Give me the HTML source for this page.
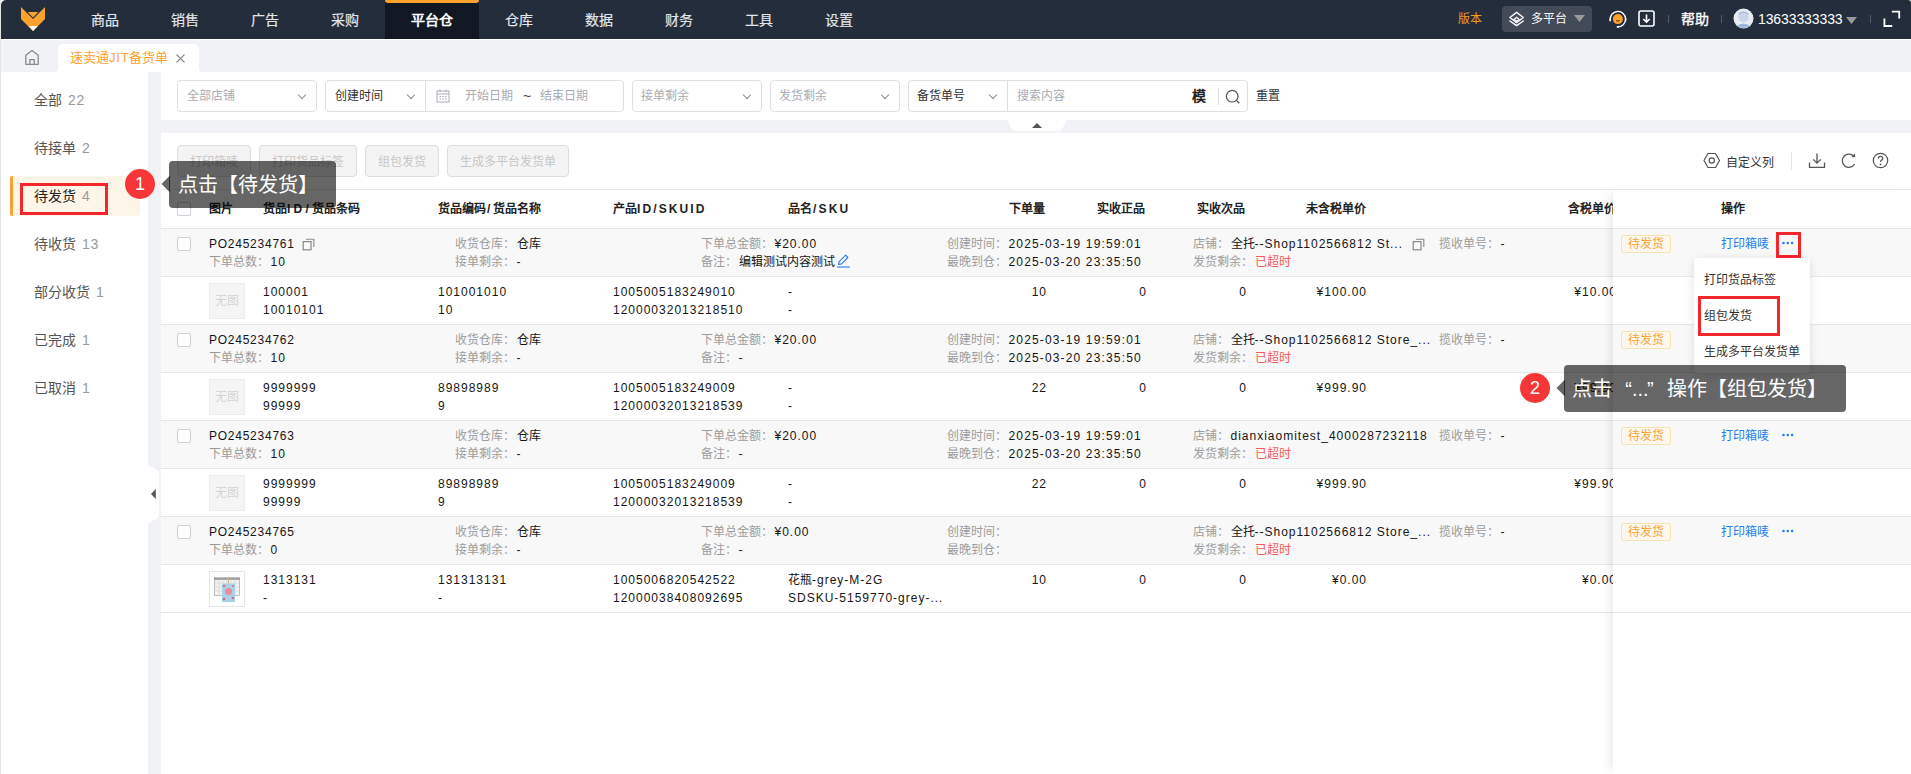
<!DOCTYPE html>
<html lang="zh-CN"><head><meta charset="utf-8">
<style>
*{box-sizing:border-box;margin:0;padding:0}
html,body{width:1911px;height:774px;overflow:hidden;background:#fff;font-family:"Liberation Sans",sans-serif;font-size:12px;color:#151515}
.a{position:absolute;white-space:nowrap}
#nav{position:absolute;left:1px;top:0;width:1910px;height:39px;background:#232d3c;border-radius:5px 3px 0 0}
.ni{position:absolute;top:0;height:39px;line-height:40px;font-size:14px;color:#e3e6eb;text-align:center;-webkit-text-stroke:.2px #e3e6eb}
.v{letter-spacing:1px}
.box{position:absolute;top:80px;height:32px;border:1px solid #dcdfe6;border-radius:4px;background:#fff}
.ph{color:#a8abb2}
.chev{position:absolute;top:11px;width:6px;height:6px;margin-left:2px;border-right:1px solid #8f8f8f;border-bottom:1px solid #8f8f8f;transform:rotate(45deg)}
.btn{position:absolute;top:145px;height:32px;line-height:32px;border:1px solid #dedede;border-radius:4px;background:#f4f4f4;color:#c6c6c6;text-align:center}
.side{position:absolute;left:34px;font-size:14px;color:#555;line-height:20px}
.side b{font-weight:normal;color:#999;margin-left:6px;letter-spacing:.6px}
.hd{position:absolute;top:201px;font-weight:bold;color:#222;line-height:16px}
.rg{position:absolute;left:161px;width:1750px;height:48px;background:#f8f8f8;border-bottom:1px solid #e6e6e6}
.ri{position:absolute;left:161px;width:1750px;height:48px;background:#fff;border-bottom:1px solid #e6e6e6}
.cb{position:absolute;left:177px;width:14px;height:14px;border:1px solid #cdd0d6;border-radius:2px;background:#fff}
.t{position:absolute;white-space:nowrap;line-height:18px}
.lb{color:#9c9c9c;margin-right:1.5px}
.vb{letter-spacing:2px}
</style></head><body>
<!-- left edge -->
<div class="a" style="left:0;top:0;width:1px;height:774px;background:#e4e4e4"></div>

<!-- NAV -->
<div id="nav">
  <svg class="a" style="left:-1px;top:0" width="60" height="39" viewBox="0 0 60 39">
    <polygon points="21,7 33,19 45,7 45,19 33,31 21,19" fill="#ffa22d"/>
    <polygon points="27.7,11.9 38.3,11.9 33,17.4" fill="#ffa22d"/>
    <polygon points="28.6,26 37.8,26 33.2,31" fill="#fff"/>
  </svg>
  <div class="ni" style="left:64px;width:80px">商品</div>
  <div class="ni" style="left:144px;width:80px">销售</div>
  <div class="ni" style="left:224px;width:80px">广告</div>
  <div class="ni" style="left:304px;width:80px">采购</div>
  <div class="ni" style="left:384px;width:94px;background:#111824;color:#fff;-webkit-text-stroke:.6px #fff">平台仓</div>
  <div class="a" style="left:384px;top:0;width:94px;height:3px;background:#ffa22d;border-radius:0 0 3px 3px"></div>
  <div class="ni" style="left:478px;width:80px">仓库</div>
  <div class="ni" style="left:558px;width:80px">数据</div>
  <div class="ni" style="left:638px;width:80px">财务</div>
  <div class="ni" style="left:718px;width:80px">工具</div>
  <div class="ni" style="left:798px;width:80px">设置</div>
  <div class="a" style="left:1457px;top:11px;font-size:12px;line-height:16px;color:#f59a23">版本</div>
  <div class="a" style="left:1501px;top:6px;width:90px;height:26px;background:#434b59;border-radius:4px"></div>
  <svg class="a" style="left:1506px;top:11px" width="18" height="16" viewBox="0 0 18 16">
    <path d="M9.6 1.4 L16.3 6.5 L9.6 11.6 L2.9 6.5 Z" fill="none" stroke="#fff" stroke-width="1.4" stroke-linejoin="round"/>
    <path d="M9.6 6.2 L12 8.2 L9.6 10.2 L7.2 8.2 Z" fill="none" stroke="#fff" stroke-width="1.2"/>
    <path d="M2.9 10 L9.6 14.6 L16.3 10" fill="none" stroke="#fff" stroke-width="1.4" stroke-linejoin="round" stroke-linecap="round"/>
  </svg>
  <div class="a" style="left:1530px;top:11px;font-size:12px;line-height:16px;color:#fff">多平台</div>
  <svg class="a" style="left:1573px;top:15px" width="11" height="7" viewBox="0 0 11 7"><path d="M0 0H11L5.5 7Z" fill="#9a9a9a"/></svg>
  <svg class="a" style="left:1606px;top:9px" width="22" height="20" viewBox="0 0 22 20">
    <circle cx="10.9" cy="10.1" r="5" fill="#ffa22d"/>
    <path d="M9.1 11.4 Q10.9 13.2 12.7 11.4" fill="none" stroke="#3a3020" stroke-width="1"/>
    <path d="M3.3 11.2 A7.7 7.7 0 1 1 10.5 17.8" fill="none" stroke="#fff" stroke-width="1.4"/>
    <rect x="2.4" y="9.4" width="1.6" height="3.2" rx="0.8" fill="#fff"/>
    <rect x="17.8" y="9.2" width="1.6" height="3.2" rx="0.8" fill="#fff"/>
    <rect x="9.6" y="16.9" width="2.4" height="1.8" rx="0.9" fill="#fff"/>
  </svg>
  <svg class="a" style="left:1637px;top:10px" width="18" height="18" viewBox="0 0 18 18">
    <rect x="1" y="1" width="15" height="15" rx="2" fill="none" stroke="#fff" stroke-width="1.6"/>
    <path d="M8.5 4.5V12 M5.3 9 L8.5 12.2 L11.7 9" fill="none" stroke="#fff" stroke-width="1.6"/>
  </svg>
  <div class="a" style="left:1667px;top:15px;width:1px;height:8px;background:#555d6a"></div>
  <div class="a" style="left:1680px;top:10px;font-size:14px;line-height:18px;color:#fff;-webkit-text-stroke:.35px #fff">帮助</div>
  <div class="a" style="left:1720px;top:15px;width:1px;height:8px;background:#555d6a"></div>
  <svg class="a" style="left:1732px;top:8px" width="21" height="21" viewBox="0 0 21 21">
    <circle cx="10.5" cy="10.5" r="10" fill="#e8ecf2"/>
    <circle cx="10.5" cy="9" r="5.2" fill="#c9d6ea"/>
    <path d="M5.5 7 Q10.5 2.5 15.5 7 L15.5 5.5 Q10.5 1.5 5.5 5.5Z" fill="#9fb6d8"/>
    <path d="M3.5 18 Q10.5 13 17.5 18 Q10.5 22 3.5 18Z" fill="#9fb6d8"/>
  </svg>
  <div class="a" style="left:1757px;top:10px;font-size:14px;line-height:18px;color:#fff;letter-spacing:-0.1px">13633333333</div>
  <svg class="a" style="left:1845px;top:17px" width="11" height="7" viewBox="0 0 11 7"><path d="M0 0H11L5.5 7Z" fill="#9a9a9a"/></svg>
  <div class="a" style="left:1869px;top:15px;width:1px;height:8px;background:#555d6a"></div>
  <svg class="a" style="left:1881px;top:10px" width="20" height="18" viewBox="0 0 20 18">
    <path d="M9.8 1.6H17.2V8.6 M2.4 8.6V16H10.2" fill="none" stroke="#fff" stroke-width="1.8"/>
  </svg>
</div>

<!-- TAB BAR -->
<div class="a" style="left:1px;top:40px;width:1910px;height:12px;background:#f0f2f5"></div>
<div class="a" style="left:1px;top:40px;width:57px;height:32px;background:#f0f2f5;border-radius:0 0 4px 0"></div>
<div class="a" style="left:199px;top:40px;width:1712px;height:32px;background:#f0f2f5;border-radius:0 0 0 4px"></div>
<svg class="a" style="left:24px;top:49px" width="16" height="17" viewBox="0 0 16 17">
  <path d="M1.8 15.4V6.2L8 1.6L14.2 6.2V15.4Z" fill="none" stroke="#8a8a8a" stroke-width="1.3" stroke-linejoin="round"/>
  <path d="M5.9 15.4V10.6H10.2V15.4" fill="none" stroke="#8a8a8a" stroke-width="1.3"/>
</svg>
<div class="a" style="left:58px;top:44px;width:141px;height:28px;background:#fff;border-radius:5px 5px 0 0"></div>
<div class="a" style="left:70px;top:50px;font-size:13px;line-height:16px;color:#ff9f2e">速卖通<span style="letter-spacing:.8px">JIT</span>备货单</div>
<svg class="a" style="left:175px;top:53px" width="11" height="11" viewBox="0 0 11 11"><path d="M1.5 1.5L9.5 9.5M9.5 1.5L1.5 9.5" stroke="#8c8c8c" stroke-width="1.1"/></svg>

<!-- SIDEBAR -->
<div class="a" style="left:1px;top:72px;width:147px;height:702px;background:#fff"></div>
<div class="a" style="left:148px;top:72px;width:13px;height:702px;background:#f0f2f5"></div>
<div class="side" style="top:90px">全部<b>22</b></div>
<div class="side" style="top:138px">待接单<b>2</b></div>
<div class="a" style="left:10px;top:176px;width:130px;height:40px;background:#fef5e9;border-radius:0 4px 4px 0"></div>
<div class="a" style="left:10px;top:176px;width:3px;height:40px;background:#ffa22d;border-radius:2px 0 0 2px"></div>
<div class="side" style="top:186px;color:#222">待发货<b>4</b></div>
<div class="side" style="top:234px">待收货<b>13</b></div>
<div class="side" style="top:282px">部分收货<b>1</b></div>
<div class="side" style="top:330px">已完成<b>1</b></div>
<div class="side" style="top:378px">已取消<b>1</b></div>
<div class="a" style="left:20px;top:183px;width:88px;height:32px;border:3px solid #f3272b"></div>
<!-- collapse tab left -->
<svg class="a" style="left:148px;top:465px" width="12" height="58" viewBox="0 0 12 58">
  <path d="M0 0 Q0 0 0 0 L8 4 Q11 5.5 11 9 V49 Q11 52.5 8 54 L0 58Z" fill="#fff"/>
  <path d="M7.8 24 V34 L3 29Z" fill="#555"/>
</svg>

<!-- FILTER PANEL -->
<div class="a" style="left:161px;top:72px;width:1750px;height:48px;background:#fff"></div>
<div class="a" style="left:161px;top:120px;width:1750px;height:13px;background:#f0f2f5"></div>
<div class="box" style="left:177px;width:140px"><span class="a ph" style="left:9px;top:7px;line-height:16px">全部店铺</span><i class="chev" style="left:119px"></i></div>
<div class="box" style="left:325px;width:299px">
  <span class="a" style="left:9px;top:7px;line-height:16px;color:#303133">创建时间</span><i class="chev" style="left:80px"></i>
  <div class="a" style="left:99px;top:0;width:1px;height:30px;background:#dcdfe6"></div>
  <svg class="a" style="left:110px;top:8px" width="14" height="14" viewBox="0 0 14 14"><rect x="1" y="2" width="12" height="11" fill="none" stroke="#a8abb2" stroke-width="1"/><path d="M1 5H13M4 0.5V3M10 0.5V3M3.5 7.5H5M6.3 7.5H7.8M9 7.5H10.5M3.5 10H5M6.3 10H7.8M9 10H10.5" stroke="#a8abb2" stroke-width="1"/></svg>
  <span class="a ph" style="left:139px;top:7px;line-height:16px">开始日期</span>
  <span class="a" style="left:197px;top:7px;line-height:16px;color:#444;font-size:14px">~</span>
  <span class="a ph" style="left:214px;top:7px;line-height:16px">结束日期</span>
</div>
<div class="box" style="left:632px;width:130px"><span class="a ph" style="left:8px;top:7px;line-height:16px">接单剩余</span><i class="chev" style="left:109px"></i></div>
<div class="box" style="left:770px;width:130px"><span class="a ph" style="left:8px;top:7px;line-height:16px">发货剩余</span><i class="chev" style="left:109px"></i></div>
<div class="box" style="left:908px;width:340px">
  <span class="a" style="left:8px;top:7px;line-height:16px;color:#303133">备货单号</span><i class="chev" style="left:79px"></i>
  <div class="a" style="left:98px;top:0;width:1px;height:30px;background:#dcdfe6"></div>
  <span class="a ph" style="left:108px;top:7px;line-height:16px">搜索内容</span>
  <span class="a" style="left:283px;top:6px;line-height:18px;font-size:14px;font-weight:bold;color:#222">模</span>
  <div class="a" style="left:309px;top:7px;width:1px;height:17px;background:#dcdfe6"></div>
  <svg class="a" style="left:316px;top:8px" width="16" height="16" viewBox="0 0 16 16"><circle cx="7.2" cy="7.2" r="5.8" fill="none" stroke="#555" stroke-width="1.2"/><path d="M11.4 11.4L14.3 14.3" stroke="#555" stroke-width="1.3"/></svg>
</div>
<div class="a" style="left:1256px;top:88px;line-height:16px;color:#303133">重置</div>
<svg class="a" style="left:1007px;top:119px" width="60" height="13" viewBox="0 0 60 13">
  <path d="M0.5 0.5 L59.5 0.5 L56 8.5 Q54.5 12 50.5 12 L9.5 12 Q5.5 12 4 8.5Z" fill="#fff"/>
  <path d="M25 9H35L30 4Z" fill="#555"/>
</svg>
<!-- TOOLBAR + TABLE PANEL -->
<div class="a" style="left:161px;top:133px;width:1750px;height:641px;background:#fff"></div>
<div class="btn" style="left:177px;width:74px">打印箱唛</div>
<div class="btn" style="left:259px;width:98px">打印货品标签</div>
<div class="btn" style="left:365px;width:74px">组包发货</div>
<div class="btn" style="left:447px;width:122px">生成多平台发货单</div>
<svg class="a" style="left:1703px;top:152px" width="18" height="17" viewBox="0 0 18 17">
  <path d="M5 1.5H12.5L16.5 8.5L12.5 15.5H5L1 8.5Z" fill="none" stroke="#555" stroke-width="1.2" stroke-linejoin="round"/>
  <circle cx="8.8" cy="8.5" r="2.6" fill="none" stroke="#555" stroke-width="1.2"/>
</svg>
<div class="a" style="left:1726px;top:155px;line-height:16px;color:#333">自定义列</div>
<div class="a" style="left:1791px;top:152px;width:1px;height:18px;background:#e4e4e4"></div>
<svg class="a" style="left:1808px;top:152px" width="18" height="17" viewBox="0 0 18 17">
  <path d="M9 1.5V11 M5.2 7.4L9 11.2L12.8 7.4 M1.5 10.5V15.3H16.5V10.5" fill="none" stroke="#555" stroke-width="1.3"/>
</svg>
<svg class="a" style="left:1840px;top:152px" width="17" height="17" viewBox="0 0 17 17">
  <path d="M14.2 4.8 A6.6 6.6 0 1 0 14.6 12" fill="none" stroke="#555" stroke-width="1.3"/>
  <path d="M11.6 4.9 L15.3 5.3 L14.8 1.6Z" fill="#555"/>
</svg>
<svg class="a" style="left:1872px;top:152px" width="17" height="17" viewBox="0 0 17 17">
  <circle cx="8.5" cy="8.5" r="7.2" fill="none" stroke="#555" stroke-width="1.2"/>
  <path d="M6.3 6.6 Q6.3 4.3 8.5 4.3 Q10.7 4.3 10.7 6.4 Q10.7 7.7 9.4 8.3 Q8.5 8.8 8.5 10" fill="none" stroke="#555" stroke-width="1.3"/>
  <circle cx="8.5" cy="12.4" r="0.9" fill="#555"/>
</svg>
<!-- table header -->
<div class="a" style="left:161px;top:189px;width:1750px;height:1px;background:#e6e6e6"></div>
<div class="a" style="left:161px;top:228px;width:1750px;height:1px;background:#e6e6e6"></div>
<div class="cb" style="top:202px"></div>
<div class="hd" style="left:209px">图片</div>
<div class="hd" style="left:263px">货品<span style="letter-spacing:3.2px">ID/</span>货品条码</div>
<div class="hd" style="left:438px">货品编码<span style="letter-spacing:3px;margin-left:1px">/</span>货品名称</div>
<div class="hd" style="left:613px">产品<span style="letter-spacing:2.1px">ID/SKUID</span></div>
<div class="hd" style="left:788px">品名<span style="letter-spacing:2.2px;margin-left:1px">/SKU</span></div>
<div class="hd" style="left:945px;width:100px;text-align:right">下单量</div>
<div class="hd" style="left:1045px;width:100px;text-align:right">实收正品</div>
<div class="hd" style="left:1145px;width:100px;text-align:right">实收次品</div>
<div class="hd" style="left:1306px">未含税单价</div>
<div class="hd" style="left:1513px;width:103px;text-align:right">含税单价</div>

<div class="a" style="left:161px;top:229px;width:1750px;height:47px;background:#f8f8f8"></div>
<div class="a" style="left:161px;top:276px;width:1750px;height:1px;background:#e6e6e6"></div>
<div class="cb" style="top:237px"></div>
<div class="t" style="left:209px;top:235px;letter-spacing:.75px">PO245234761</div>
<svg class="a" style="left:302px;top:238px" width="13" height="13" viewBox="0 0 13 13"><path d="M4 1.2H11.8V9" fill="none" stroke="#888" stroke-width="1.1"/><rect x="1.2" y="3.6" width="7.8" height="8.2" fill="none" stroke="#888" stroke-width="1.2"/></svg>
<div class="t" style="left:209px;top:253px"><span class="lb">下单总数：</span><span class="v">10</span></div>
<div class="t" style="left:455px;top:235px"><span class="lb">收货仓库：</span>仓库</div>
<div class="t" style="left:455px;top:253px"><span class="lb">接单剩余：</span><span class="v">-</span></div>
<div class="t" style="left:701px;top:235px"><span class="lb">下单总金额：</span><span class="v">¥20.00</span></div>
<div class="t" style="left:701px;top:253px"><span class="lb">备注：</span>编辑测试内容测试</div>
<svg class="a" style="left:836px;top:254px" width="15" height="14" viewBox="0 0 15 14"><path d="M2.5 10.5L3.2 7.6L9.6 1.2L11.9 3.5L5.5 9.9Z" fill="none" stroke="#2a7cf6" stroke-width="1.1" stroke-linejoin="round"/><path d="M1 13H14" stroke="#2a7cf6" stroke-width="1.1"/></svg>
<div class="t" style="left:947px;top:235px"><span class="lb">创建时间：</span><span style="letter-spacing:1.15px">2025-03-19 19:59:01</span></div>
<div class="t" style="left:947px;top:253px"><span class="lb">最晚到仓：</span><span style="letter-spacing:1.15px">2025-03-20 23:35:50</span></div>
<div class="t" style="left:1193px;top:235px"><span class="lb">店铺：</span>全托<span class="v">--Shop1102566812 St...</span></div>
<svg class="a" style="left:1412px;top:238px" width="13" height="13" viewBox="0 0 13 13"><path d="M4 1.2H11.8V9" fill="none" stroke="#888" stroke-width="1.1"/><rect x="1.2" y="3.6" width="7.8" height="8.2" fill="none" stroke="#888" stroke-width="1.2"/></svg>
<div class="t" style="left:1193px;top:253px"><span class="lb">发货剩余：</span><span style="color:#f45a5a">已超时</span></div>
<div class="t" style="left:1439px;top:235px"><span class="lb">揽收单号：</span><span class="v">-</span></div>
<div class="a" style="left:161px;top:324px;width:1750px;height:1px;background:#e6e6e6"></div>
<div class="a" style="left:209px;top:283px;width:36px;height:36px;background:#f5f5f5;border:1px solid #ececec;color:#d5d5d5;font-size:12px;line-height:34px;text-align:center">无图</div>
<div class="t" style="left:263px;top:283px"><span class="v">100001</span></div>
<div class="t" style="left:263px;top:301px"><span class="v">10010101</span></div>
<div class="t" style="left:438px;top:283px"><span class="v">101001010</span></div>
<div class="t" style="left:438px;top:301px"><span class="v">10</span></div>
<div class="t" style="left:613px;top:283px"><span class="v">1005005183249010</span></div>
<div class="t" style="left:613px;top:301px"><span class="v">12000032013218510</span></div>
<div class="t" style="left:788px;top:283px"><span class="v">-</span></div>
<div class="t" style="left:788px;top:301px"><span class="v">-</span></div>
<div class="t" style="left:945px;width:102px;text-align:right;top:283px"><span class="v">10</span></div>
<div class="t" style="left:1045px;width:102px;text-align:right;top:283px"><span class="v">0</span></div>
<div class="t" style="left:1145px;width:102px;text-align:right;top:283px"><span class="v">0</span></div>
<div class="t" style="left:1265px;width:102px;text-align:right;top:283px"><span class="v">¥100.00</span></div>
<div class="t" style="left:1515px;width:102px;text-align:right;top:283px"><span class="v">¥10.00</span></div>
<div class="a" style="left:161px;top:325px;width:1750px;height:47px;background:#f8f8f8"></div>
<div class="a" style="left:161px;top:372px;width:1750px;height:1px;background:#e6e6e6"></div>
<div class="cb" style="top:333px"></div>
<div class="t" style="left:209px;top:331px;letter-spacing:.75px">PO245234762</div>
<div class="t" style="left:209px;top:349px"><span class="lb">下单总数：</span><span class="v">10</span></div>
<div class="t" style="left:455px;top:331px"><span class="lb">收货仓库：</span>仓库</div>
<div class="t" style="left:455px;top:349px"><span class="lb">接单剩余：</span><span class="v">-</span></div>
<div class="t" style="left:701px;top:331px"><span class="lb">下单总金额：</span><span class="v">¥20.00</span></div>
<div class="t" style="left:701px;top:349px"><span class="lb">备注：</span><span class="v">-</span></div>
<div class="t" style="left:947px;top:331px"><span class="lb">创建时间：</span><span style="letter-spacing:1.15px">2025-03-19 19:59:01</span></div>
<div class="t" style="left:947px;top:349px"><span class="lb">最晚到仓：</span><span style="letter-spacing:1.15px">2025-03-20 23:35:50</span></div>
<div class="t" style="left:1193px;top:331px"><span class="lb">店铺：</span>全托<span class="v">--Shop1102566812 Store_...</span></div>
<div class="t" style="left:1193px;top:349px"><span class="lb">发货剩余：</span><span style="color:#f45a5a">已超时</span></div>
<div class="t" style="left:1439px;top:331px"><span class="lb">揽收单号：</span><span class="v">-</span></div>
<div class="a" style="left:161px;top:420px;width:1750px;height:1px;background:#e6e6e6"></div>
<div class="a" style="left:209px;top:379px;width:36px;height:36px;background:#f5f5f5;border:1px solid #ececec;color:#d5d5d5;font-size:12px;line-height:34px;text-align:center">无图</div>
<div class="t" style="left:263px;top:379px"><span class="v">9999999</span></div>
<div class="t" style="left:263px;top:397px"><span class="v">99999</span></div>
<div class="t" style="left:438px;top:379px"><span class="v">89898989</span></div>
<div class="t" style="left:438px;top:397px"><span class="v">9</span></div>
<div class="t" style="left:613px;top:379px"><span class="v">1005005183249009</span></div>
<div class="t" style="left:613px;top:397px"><span class="v">12000032013218539</span></div>
<div class="t" style="left:788px;top:379px"><span class="v">-</span></div>
<div class="t" style="left:788px;top:397px"><span class="v">-</span></div>
<div class="t" style="left:945px;width:102px;text-align:right;top:379px"><span class="v">22</span></div>
<div class="t" style="left:1045px;width:102px;text-align:right;top:379px"><span class="v">0</span></div>
<div class="t" style="left:1145px;width:102px;text-align:right;top:379px"><span class="v">0</span></div>
<div class="t" style="left:1265px;width:102px;text-align:right;top:379px"><span class="v">¥999.90</span></div>
<div class="t" style="left:1515px;width:102px;text-align:right;top:379px"><span class="v">¥99.90</span></div>
<div class="a" style="left:161px;top:421px;width:1750px;height:47px;background:#f8f8f8"></div>
<div class="a" style="left:161px;top:468px;width:1750px;height:1px;background:#e6e6e6"></div>
<div class="cb" style="top:429px"></div>
<div class="t" style="left:209px;top:427px;letter-spacing:.75px">PO245234763</div>
<div class="t" style="left:209px;top:445px"><span class="lb">下单总数：</span><span class="v">10</span></div>
<div class="t" style="left:455px;top:427px"><span class="lb">收货仓库：</span>仓库</div>
<div class="t" style="left:455px;top:445px"><span class="lb">接单剩余：</span><span class="v">-</span></div>
<div class="t" style="left:701px;top:427px"><span class="lb">下单总金额：</span><span class="v">¥20.00</span></div>
<div class="t" style="left:701px;top:445px"><span class="lb">备注：</span><span class="v">-</span></div>
<div class="t" style="left:947px;top:427px"><span class="lb">创建时间：</span><span style="letter-spacing:1.15px">2025-03-19 19:59:01</span></div>
<div class="t" style="left:947px;top:445px"><span class="lb">最晚到仓：</span><span style="letter-spacing:1.15px">2025-03-20 23:35:50</span></div>
<div class="t" style="left:1193px;top:427px"><span class="lb">店铺：</span><span class="v">dianxiaomitest_4000287232118</span></div>
<div class="t" style="left:1193px;top:445px"><span class="lb">发货剩余：</span><span style="color:#f45a5a">已超时</span></div>
<div class="t" style="left:1439px;top:427px"><span class="lb">揽收单号：</span><span class="v">-</span></div>
<div class="a" style="left:161px;top:516px;width:1750px;height:1px;background:#e6e6e6"></div>
<div class="a" style="left:209px;top:475px;width:36px;height:36px;background:#f5f5f5;border:1px solid #ececec;color:#d5d5d5;font-size:12px;line-height:34px;text-align:center">无图</div>
<div class="t" style="left:263px;top:475px"><span class="v">9999999</span></div>
<div class="t" style="left:263px;top:493px"><span class="v">99999</span></div>
<div class="t" style="left:438px;top:475px"><span class="v">89898989</span></div>
<div class="t" style="left:438px;top:493px"><span class="v">9</span></div>
<div class="t" style="left:613px;top:475px"><span class="v">1005005183249009</span></div>
<div class="t" style="left:613px;top:493px"><span class="v">12000032013218539</span></div>
<div class="t" style="left:788px;top:475px"><span class="v">-</span></div>
<div class="t" style="left:788px;top:493px"><span class="v">-</span></div>
<div class="t" style="left:945px;width:102px;text-align:right;top:475px"><span class="v">22</span></div>
<div class="t" style="left:1045px;width:102px;text-align:right;top:475px"><span class="v">0</span></div>
<div class="t" style="left:1145px;width:102px;text-align:right;top:475px"><span class="v">0</span></div>
<div class="t" style="left:1265px;width:102px;text-align:right;top:475px"><span class="v">¥999.90</span></div>
<div class="t" style="left:1515px;width:102px;text-align:right;top:475px"><span class="v">¥99.90</span></div>
<div class="a" style="left:161px;top:517px;width:1750px;height:47px;background:#f8f8f8"></div>
<div class="a" style="left:161px;top:564px;width:1750px;height:1px;background:#e6e6e6"></div>
<div class="cb" style="top:525px"></div>
<div class="t" style="left:209px;top:523px;letter-spacing:.75px">PO245234765</div>
<div class="t" style="left:209px;top:541px"><span class="lb">下单总数：</span><span class="v">0</span></div>
<div class="t" style="left:455px;top:523px"><span class="lb">收货仓库：</span>仓库</div>
<div class="t" style="left:455px;top:541px"><span class="lb">接单剩余：</span><span class="v">-</span></div>
<div class="t" style="left:701px;top:523px"><span class="lb">下单总金额：</span><span class="v">¥0.00</span></div>
<div class="t" style="left:701px;top:541px"><span class="lb">备注：</span><span class="v">-</span></div>
<div class="t" style="left:947px;top:523px"><span class="lb">创建时间：</span><span style="letter-spacing:1.15px"></span></div>
<div class="t" style="left:947px;top:541px"><span class="lb">最晚到仓：</span><span style="letter-spacing:1.15px"></span></div>
<div class="t" style="left:1193px;top:523px"><span class="lb">店铺：</span>全托<span class="v">--Shop1102566812 Store_...</span></div>
<div class="t" style="left:1193px;top:541px"><span class="lb">发货剩余：</span><span style="color:#f45a5a">已超时</span></div>
<div class="t" style="left:1439px;top:523px"><span class="lb">揽收单号：</span><span class="v">-</span></div>
<div class="a" style="left:161px;top:612px;width:1750px;height:1px;background:#e6e6e6"></div>
<div class="a" style="left:209px;top:571px;width:36px;height:36px;background:#fff;border:1px solid #e6e6e6"></div>
<svg class="a" style="left:214px;top:577px" width="26" height="26" viewBox="0 0 26 26">
<rect x="0.5" y="0.5" width="25" height="18" fill="#f1f1f1" stroke="#9a9a9a" stroke-width="0.6"/>
<path d="M0.5 2H25.5" stroke="#555" stroke-width="1"/>
<path d="M5 2V18M9 2V18M13 2V18M17 2V18M21 2V18M1 6H25M1 10H25M1 14H25" stroke="#cfcfcf" stroke-width="0.5"/>
<rect x="8" y="6.5" width="13" height="18.5" fill="#a6d3e6"/>
<circle cx="14.5" cy="14.5" r="3.6" fill="#f08aa0"/>
<circle cx="10" cy="9" r="1.2" fill="#e86a8a"/><circle cx="19" cy="21" r="1.3" fill="#e86a8a"/><circle cx="10" cy="22" r="1.2" fill="#d75d7c"/><circle cx="19" cy="9" r="1" fill="#e86a8a"/>
<path d="M14.5 0V6.5" stroke="#c9b48a" stroke-width="1"/>
</svg>
<div class="t" style="left:263px;top:571px"><span class="v">1313131</span></div>
<div class="t" style="left:263px;top:589px"><span class="v">-</span></div>
<div class="t" style="left:438px;top:571px"><span class="v">131313131</span></div>
<div class="t" style="left:438px;top:589px"><span class="v">-</span></div>
<div class="t" style="left:613px;top:571px"><span class="v">1005006820542522</span></div>
<div class="t" style="left:613px;top:589px"><span class="v">12000038408092695</span></div>
<div class="t" style="left:788px;top:571px">花瓶<span class="v">-grey-M-2G</span></div>
<div class="t" style="left:788px;top:589px"><span class="v">SDSKU-5159770-grey-...</span></div>
<div class="t" style="left:945px;width:102px;text-align:right;top:571px"><span class="v">10</span></div>
<div class="t" style="left:1045px;width:102px;text-align:right;top:571px"><span class="v">0</span></div>
<div class="t" style="left:1145px;width:102px;text-align:right;top:571px"><span class="v">0</span></div>
<div class="t" style="left:1265px;width:102px;text-align:right;top:571px"><span class="v">¥0.00</span></div>
<div class="t" style="left:1515px;width:102px;text-align:right;top:571px"><span class="v">¥0.00</span></div>
<!-- fixed -->
<div class="a" style="left:1613px;top:189px;width:298px;height:585px;background:#fff;box-shadow:-7px 0 10px -5px rgba(0,0,0,0.10)"></div>
<div class="a" style="left:1613px;top:189px;width:298px;height:1px;background:#e6e6e6"></div>
<div class="a" style="left:1613px;top:228px;width:298px;height:1px;background:#e6e6e6"></div>
<div class="hd" style="left:1721px">操作</div>
<div class="a" style="left:1613px;top:229px;width:298px;height:47px;background:#f8f8f8"></div>
<div class="a" style="left:1613px;top:276px;width:298px;height:1px;background:#e6e6e6"></div>
<div class="a" style="left:1613px;top:324px;width:298px;height:1px;background:#e6e6e6"></div>
<div class="a" style="left:1621px;top:235px;width:50px;height:18px;background:#fdf6ec;border:1px solid #fbe1b6;border-radius:2px;color:#f7a441;line-height:16px;text-align:center">待发货</div>
<div class="t" style="left:1721px;top:235px;color:#1f7ff0">打印箱唛</div>
<svg class="a" style="left:1781px;top:241px" width="14" height="4" viewBox="0 0 14 4"><circle cx="2.5" cy="2" r="1.3" fill="#1f7ff0"/><circle cx="6.8" cy="2" r="1.3" fill="#1f7ff0"/><circle cx="11.1" cy="2" r="1.3" fill="#1f7ff0"/></svg>
<div class="a" style="left:1613px;top:325px;width:298px;height:47px;background:#f8f8f8"></div>
<div class="a" style="left:1613px;top:372px;width:298px;height:1px;background:#e6e6e6"></div>
<div class="a" style="left:1613px;top:420px;width:298px;height:1px;background:#e6e6e6"></div>
<div class="a" style="left:1621px;top:331px;width:50px;height:18px;background:#fdf6ec;border:1px solid #fbe1b6;border-radius:2px;color:#f7a441;line-height:16px;text-align:center">待发货</div>
<div class="a" style="left:1613px;top:421px;width:298px;height:47px;background:#f8f8f8"></div>
<div class="a" style="left:1613px;top:468px;width:298px;height:1px;background:#e6e6e6"></div>
<div class="a" style="left:1613px;top:516px;width:298px;height:1px;background:#e6e6e6"></div>
<div class="a" style="left:1621px;top:427px;width:50px;height:18px;background:#fdf6ec;border:1px solid #fbe1b6;border-radius:2px;color:#f7a441;line-height:16px;text-align:center">待发货</div>
<div class="t" style="left:1721px;top:427px;color:#1f7ff0">打印箱唛</div>
<svg class="a" style="left:1781px;top:433px" width="14" height="4" viewBox="0 0 14 4"><circle cx="2.5" cy="2" r="1.3" fill="#1f7ff0"/><circle cx="6.8" cy="2" r="1.3" fill="#1f7ff0"/><circle cx="11.1" cy="2" r="1.3" fill="#1f7ff0"/></svg>
<div class="a" style="left:1613px;top:517px;width:298px;height:47px;background:#f8f8f8"></div>
<div class="a" style="left:1613px;top:564px;width:298px;height:1px;background:#e6e6e6"></div>
<div class="a" style="left:1613px;top:612px;width:298px;height:1px;background:#e6e6e6"></div>
<div class="a" style="left:1621px;top:523px;width:50px;height:18px;background:#fdf6ec;border:1px solid #fbe1b6;border-radius:2px;color:#f7a441;line-height:16px;text-align:center">待发货</div>
<div class="t" style="left:1721px;top:523px;color:#1f7ff0">打印箱唛</div>
<svg class="a" style="left:1781px;top:529px" width="14" height="4" viewBox="0 0 14 4"><circle cx="2.5" cy="2" r="1.3" fill="#1f7ff0"/><circle cx="6.8" cy="2" r="1.3" fill="#1f7ff0"/><circle cx="11.1" cy="2" r="1.3" fill="#1f7ff0"/></svg>
<!-- dropdown menu -->
<div class="a" style="left:1694px;top:258px;width:116px;height:115px;background:#fff;border-radius:4px;box-shadow:0 2px 10px rgba(0,0,0,0.12)"></div>
<div class="t" style="left:1704px;top:271px;color:#333">打印货品标签</div>
<div class="t" style="left:1704px;top:307px;color:#333">组包发货</div>
<div class="t" style="left:1704px;top:343px;color:#333">生成多平台发货单</div>
<div class="a" style="left:1698px;top:296px;width:82px;height:40px;border:3px solid #f3272b"></div>
<div class="a" style="left:1776px;top:232px;width:25px;height:26px;border:3px solid #f3272b"></div>
<!-- tooltip 1 -->
<div class="a" style="left:125px;top:169px;width:30px;height:30px;border-radius:50%;background:#f73737;color:#fff;font-size:18px;line-height:30px;text-align:center">1</div>
<svg class="a" style="left:161px;top:175px" width="9" height="18" viewBox="0 0 9 18"><path d="M9 0.5V17.5L0.5 9Z" fill="rgba(0,0,0,0.6)"/></svg>
<div class="a" style="left:169px;top:161px;width:167px;height:47px;background:rgba(0,0,0,0.6);border-radius:4px;color:#fff;font-size:20px;line-height:49px;padding-left:9px">点击【待发货】</div>
<!-- tooltip 2 -->
<div class="a" style="left:1520px;top:373px;width:30px;height:30px;border-radius:50%;background:#f73737;color:#fff;font-size:18px;line-height:30px;text-align:center">2</div>
<svg class="a" style="left:1556px;top:379px" width="9" height="18" viewBox="0 0 9 18"><path d="M9 0.5V17.5L0.5 9Z" fill="rgba(0,0,0,0.6)"/></svg>
<div class="a" style="left:1564px;top:365px;width:282px;height:47px;background:rgba(0,0,0,0.6);border-radius:4px;color:#fff;font-size:20px;line-height:49px;padding-left:8px">点击<span style="display:inline-block;width:20px;text-align:right">“</span><span style="display:inline-block;width:15px;text-align:center">...</span><span style="display:inline-block;width:20px;text-align:left">”</span>操作【组包发货】</div>

</body></html>
